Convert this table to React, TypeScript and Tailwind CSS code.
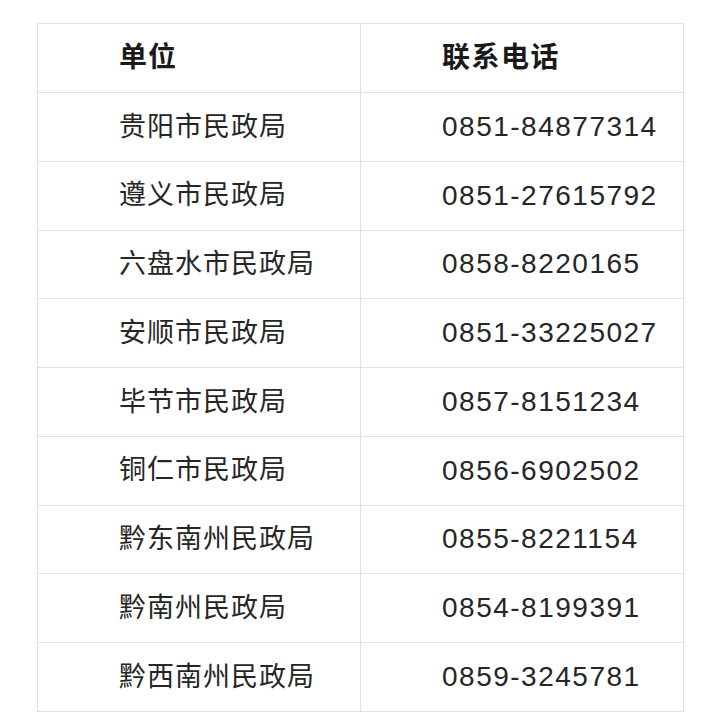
import React from "react";

const rows: [string, string][] = [
  ["贵阳市民政局", "0851-84877314"],
  ["遵义市民政局", "0851-27615792"],
  ["六盘水市民政局", "0858-8220165"],
  ["安顺市民政局", "0851-33225027"],
  ["毕节市民政局", "0857-8151234"],
  ["铜仁市民政局", "0856-6902502"],
  ["黔东南州民政局", "0855-8221154"],
  ["黔南州民政局", "0854-8199391"],
  ["黔西南州民政局", "0859-3245781"],
];

const font = {
  fontFamily:
    '"Liberation Sans", "Noto Sans CJK SC", sans-serif',
};

export default function App() {
  return (
    <div className="w-[720px] h-[724px] bg-white pt-[23px] pl-[37px]" style={font}>
      <div className="w-[647px] grid grid-cols-2 border-l border-t border-[#e2e2e2]">
        <div className="h-[69px] border-r border-b border-[#e2e2e2] flex items-center pl-[81px] text-[28px] font-bold tracking-[1px] text-[#1a1a1a]">
          单位
        </div>
        <div className="h-[69px] border-r border-b border-[#e2e2e2] flex items-center pl-[81px] text-[28px] font-bold tracking-[1.5px] text-[#1a1a1a]">
          联系电话
        </div>
        {rows.map(([name, phone], i) => (
          <React.Fragment key={i}>
            <div className="h-[68.75px] border-r border-b border-[#e2e2e2] flex items-center pl-[81px] text-[27px] tracking-[1px] text-[#262626]">
              {name}
            </div>
            <div className="h-[68.75px] border-r border-b border-[#e2e2e2] flex items-center pl-[81px] text-[28px] tracking-[1.5px] text-[#262626]">
              {phone}
            </div>
          </React.Fragment>
        ))}
      </div>
    </div>
  );
}
